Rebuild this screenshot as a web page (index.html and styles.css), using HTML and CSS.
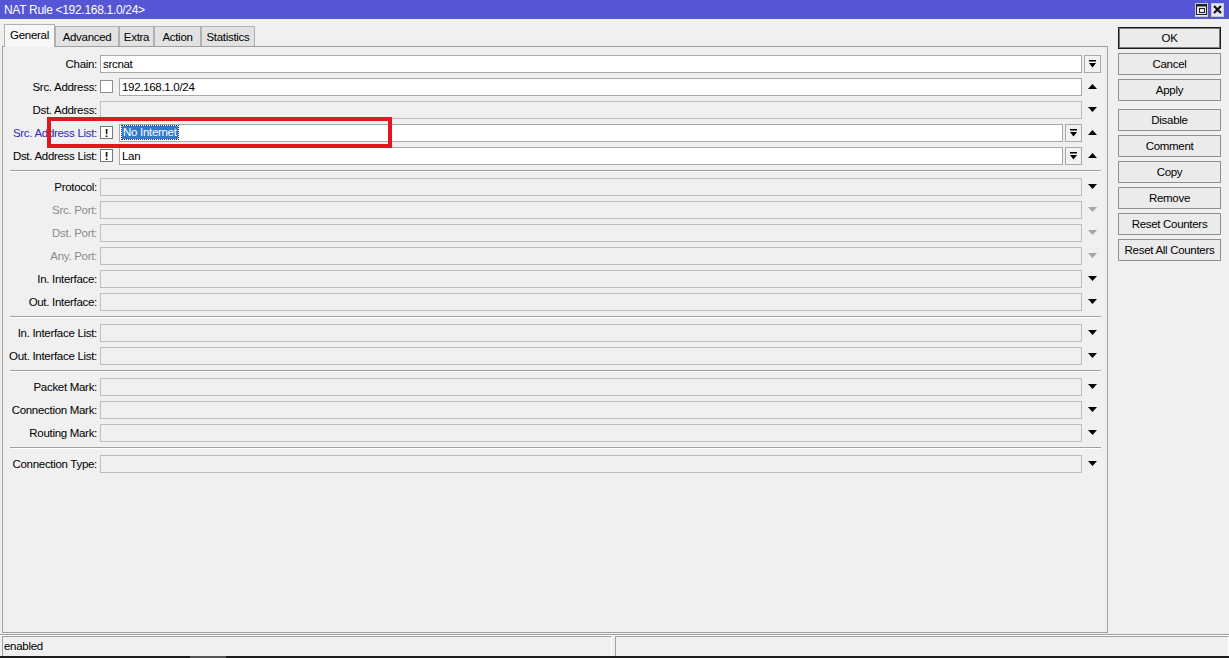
FILE: index.html
```html
<!DOCTYPE html>
<html>
<head>
<meta charset="utf-8">
<title>NAT Rule</title>
<link rel="stylesheet" href="styles.css">
</head>
<body>
<div class="win">
  <div class="titlebar">
    <span class="title">NAT Rule &lt;192.168.1.0/24&gt;</span>
    <div class="tbtns">
      <span class="tbtn"><svg width="11" height="11" viewBox="0 0 11 11"><rect x="0.5" y="0.5" width="10" height="10" fill="none" stroke="#222" stroke-width="1"/><rect x="0.5" y="0.5" width="10" height="2" fill="#222"/><rect x="3.5" y="4.5" width="5" height="4" fill="none" stroke="#222" stroke-width="1"/></svg></span>
      <span class="tbtn"><svg width="9" height="9" viewBox="0 0 9 9"><path d="M1 1 L8 8 M8 1 L1 8" stroke="#111" stroke-width="2.2"/></svg></span>
    </div>
  </div>
  <div class="main">
    <div class="left">
      <div class="tabs">
        <div class="tab active t1">General</div>
        <div class="tab t2">Advanced</div>
        <div class="tab t3">Extra</div>
        <div class="tab t4">Action</div>
        <div class="tab t5">Statistics</div>
      </div>
      <div class="panel">
        <div class="row">
          <span class="lbl">Chain:</span>
          <div class="field on">srcnat</div>
          <div class="tail end"><span class="dd"><svg width="9" height="8" viewBox="0 0 9 8"><rect x="1" y="0" width="7" height="1.5"/><polygon points="1,3 8,3 4.5,7.5"/></svg></span></div>
        </div>
        <div class="row">
          <span class="lbl">Src. Address:</span>
          <span class="chk"></span>
          <div class="field on">192.168.1.0/24</div>
          <div class="tail"><svg width="9" height="5" viewBox="0 0 9 5"><polygon points="0,5 9,5 4.5,0"/></svg></div>
        </div>
        <div class="row">
          <span class="lbl">Dst. Address:</span>
          <div class="field"></div>
          <div class="tail"><svg width="9" height="5" viewBox="0 0 9 5"><polygon points="0,0 9,0 4.5,5"/></svg></div>
        </div>
        <div class="row">
          <span class="lbl blue">Src. Address List:</span>
          <span class="chk bang">!</span>
          <div class="field on"><span class="sel">No Internet</span></div>
          <span class="dd"><svg width="9" height="8" viewBox="0 0 9 8"><rect x="1" y="0" width="7" height="1.5"/><polygon points="1,3 8,3 4.5,7.5"/></svg></span>
          <div class="tail"><svg width="9" height="5" viewBox="0 0 9 5"><polygon points="0,5 9,5 4.5,0"/></svg></div>
        </div>
        <div class="row">
          <span class="lbl">Dst. Address List:</span>
          <span class="chk bang">!</span>
          <div class="field on">Lan</div>
          <span class="dd"><svg width="9" height="8" viewBox="0 0 9 8"><rect x="1" y="0" width="7" height="1.5"/><polygon points="1,3 8,3 4.5,7.5"/></svg></span>
          <div class="tail"><svg width="9" height="5" viewBox="0 0 9 5"><polygon points="0,5 9,5 4.5,0"/></svg></div>
        </div>
        <div class="sep"></div>
        <div class="row">
          <span class="lbl">Protocol:</span>
          <div class="field"></div>
          <div class="tail"><svg width="9" height="5" viewBox="0 0 9 5"><polygon points="0,0 9,0 4.5,5"/></svg></div>
        </div>
        <div class="row">
          <span class="lbl dim">Src. Port:</span>
          <div class="field"></div>
          <div class="tail dimarrow"><svg width="9" height="5" viewBox="0 0 9 5"><polygon points="0,0 9,0 4.5,5"/></svg></div>
        </div>
        <div class="row">
          <span class="lbl dim">Dst. Port:</span>
          <div class="field"></div>
          <div class="tail dimarrow"><svg width="9" height="5" viewBox="0 0 9 5"><polygon points="0,0 9,0 4.5,5"/></svg></div>
        </div>
        <div class="row">
          <span class="lbl dim">Any. Port:</span>
          <div class="field"></div>
          <div class="tail dimarrow"><svg width="9" height="5" viewBox="0 0 9 5"><polygon points="0,0 9,0 4.5,5"/></svg></div>
        </div>
        <div class="row">
          <span class="lbl">In. Interface:</span>
          <div class="field"></div>
          <div class="tail"><svg width="9" height="5" viewBox="0 0 9 5"><polygon points="0,0 9,0 4.5,5"/></svg></div>
        </div>
        <div class="row">
          <span class="lbl">Out. Interface:</span>
          <div class="field"></div>
          <div class="tail"><svg width="9" height="5" viewBox="0 0 9 5"><polygon points="0,0 9,0 4.5,5"/></svg></div>
        </div>
        <div class="sep"></div>
        <div class="row">
          <span class="lbl">In. Interface List:</span>
          <div class="field"></div>
          <div class="tail"><svg width="9" height="5" viewBox="0 0 9 5"><polygon points="0,0 9,0 4.5,5"/></svg></div>
        </div>
        <div class="row">
          <span class="lbl">Out. Interface List:</span>
          <div class="field"></div>
          <div class="tail"><svg width="9" height="5" viewBox="0 0 9 5"><polygon points="0,0 9,0 4.5,5"/></svg></div>
        </div>
        <div class="sep"></div>
        <div class="row">
          <span class="lbl">Packet Mark:</span>
          <div class="field"></div>
          <div class="tail"><svg width="9" height="5" viewBox="0 0 9 5"><polygon points="0,0 9,0 4.5,5"/></svg></div>
        </div>
        <div class="row">
          <span class="lbl">Connection Mark:</span>
          <div class="field"></div>
          <div class="tail"><svg width="9" height="5" viewBox="0 0 9 5"><polygon points="0,0 9,0 4.5,5"/></svg></div>
        </div>
        <div class="row">
          <span class="lbl">Routing Mark:</span>
          <div class="field"></div>
          <div class="tail"><svg width="9" height="5" viewBox="0 0 9 5"><polygon points="0,0 9,0 4.5,5"/></svg></div>
        </div>
        <div class="sep"></div>
        <div class="row">
          <span class="lbl">Connection Type:</span>
          <div class="field"></div>
          <div class="tail"><svg width="9" height="5" viewBox="0 0 9 5"><polygon points="0,0 9,0 4.5,5"/></svg></div>
        </div>
      </div>
    </div>
    <div class="right">
      <div class="btn def">OK</div>
      <div class="btn">Cancel</div>
      <div class="btn gap">Apply</div>
      <div class="btn">Disable</div>
      <div class="btn">Comment</div>
      <div class="btn">Copy</div>
      <div class="btn">Remove</div>
      <div class="btn">Reset Counters</div>
      <div class="btn">Reset All Counters</div>
    </div>
  </div>
  <div class="status">
    <div class="cell c1">enabled</div>
    <div class="cell c2"></div>
  </div>
  <div class="taskbar"><span class="tb-seg"></span></div>
</div>
<div class="mark"></div>
</body>
</html>
```

FILE: styles.css
```css
* { box-sizing: border-box; margin: 0; padding: 0; }
body {
  width: 1229px;
  height: 658px;
  overflow: hidden;
  position: relative;
  font-family: "Liberation Sans", Arial, sans-serif;
  font-size: 11.5px;
  letter-spacing: -0.3px;
  color: #000;
  background: #f0f0f0;
}
.win { display: flex; flex-direction: column; height: 658px; }

.titlebar {
  height: 19px;
  background: #5555d5;
  color: #fff;
  display: flex;
  align-items: center;
  justify-content: space-between;
  padding-left: 4px;
  padding-right: 5px;
}
.title { font-size: 12px; }
.tbtns { display: flex; gap: 3px; }
.tbtn {
  width: 13px;
  height: 14px;
  background: #e6e6ee;
  border: 1px solid #c8c8d8;
  display: flex;
  align-items: center;
  justify-content: center;
}

.main { display: flex; height: 615px; }
.left {
  width: 1108px;
  display: flex;
  flex-direction: column;
  padding-left: 2px;
  padding-bottom: 1px;
}
.tabs {
  height: 27px;
  display: flex;
  align-items: flex-end;
  padding-left: 2px;
  position: relative;
  z-index: 1;
}
.tab {
  height: 20px;
  border: 1px solid #b0b0b0;
  border-bottom: none;
  background: #e2e2e2;
  display: flex;
  align-items: center;
  justify-content: center;
  padding-top: 1px;
}
.tab.active {
  height: 23px;
  background: #f7f7f7;
  margin-bottom: -1px;
  padding-top: 0;
  padding-bottom: 2px;
}
.t1 { width: 51px; }
.t2 { width: 64px; }
.t3 { width: 35px; }
.t4 { width: 47px; }
.t5 { width: 54px; }

.panel {
  flex: 1;
  border: 1px solid #a0a0a0;
  background: #f0f0f0;
  padding: 5px 6px 0 0;
}
.row { height: 23px; display: flex; align-items: center; }
.lbl {
  width: 94px;
  margin-right: 3px;
  text-align: right;
  white-space: nowrap;
}
.lbl.blue { color: #2a2aae; }
.lbl.dim { color: #8c8c8c; }
.field {
  flex: 1;
  height: 18px;
  border: 1px solid #bdbdbd;
  background: #f0f0f0;
  padding-left: 2px;
  display: flex;
  align-items: center;
  white-space: nowrap;
}
.field.on { background: #fff; border-color: #a9a9a9; }
.sel {
  background: #3178d0;
  color: #fff;
  outline: 1px dotted #333;
  padding: 0 1px;
  line-height: 13px;
}
.chk {
  width: 13px;
  height: 13px;
  border: 1px solid #8e8e8e;
  background: #fff;
  margin-right: 6px;
  flex: none;
}
.chk.bang {
  display: flex;
  align-items: center;
  justify-content: center;
  font-weight: bold;
  font-size: 11px;
  letter-spacing: 0;
  border-color: #777;
}
.dd {
  width: 17px;
  height: 18px;
  border: 1px solid #a8a8a8;
  background: #f2f2f2;
  margin-left: 2px;
  display: flex;
  align-items: center;
  justify-content: center;
  flex: none;
}
.tail {
  width: 18px;
  margin-left: 1px;
  display: flex;
  align-items: center;
  justify-content: center;
  flex: none;
}
.tail.end { justify-content: flex-end; }
.tail.end .dd { margin-left: 0; }
.tail svg, .dd svg { fill: #000; display: block; }
.dimarrow svg { fill: #a6a6a6; }
.sep {
  height: 2px;
  border-top: 1px solid #a0a0a0;
  border-bottom: 1px solid #fff;
  margin: 3px 0 3px 7px;
}

.right {
  flex: 1;
  padding: 8px 8px 0 10px;
  display: flex;
  flex-direction: column;
}
.btn {
  height: 22px;
  border: 1px solid #8f8f8f;
  background: #ebebeb;
  display: flex;
  align-items: center;
  justify-content: center;
  margin-bottom: 4px;
  white-space: nowrap;
}
.btn.def { border: 1px solid #1a1a1a; box-shadow: inset 0 0 0 1px #7a7a7a; }
.btn.gap { margin-bottom: 8px; }

.status {
  height: 22px;
  border-top: 1px solid #a0a0a0;
  padding: 1px 0 0 2px;
  display: flex;
  gap: 3px;
  box-shadow: inset 0 1px 0 #fff;
}
.cell {
  height: 21px;
  border: 1px solid;
  border-color: #a0a0a0 #fff #fff #a0a0a0;
  padding-left: 1px;
  line-height: 19px;
}
.c1 { width: 610px; }
.c2 { flex: 1; }
.taskbar {
  height: 2px;
  background: #1c1c1c;
  display: flex;
}
.tb-seg { width: 36px; margin-left: 190px; background: #555; }

.mark {
  position: absolute;
  left: 47px;
  top: 117px;
  width: 345px;
  height: 31px;
  border: 4px solid #e3161d;
}
```
